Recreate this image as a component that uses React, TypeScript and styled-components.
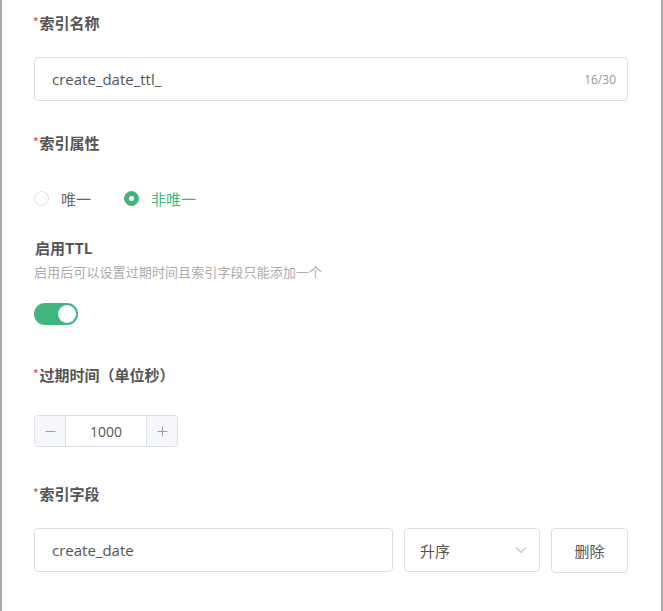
import React, { useState } from 'react';
import styled, { createGlobalStyle } from 'styled-components';

const GlobalStyle = createGlobalStyle`
  html, body {
    margin: 0;
    padding: 0;
    background: #fff;
  }
  body {
    font-family: 'Open Sans', 'Noto Sans CJK SC', sans-serif;
    color: #555;
  }
  * {
    box-sizing: border-box;
  }
`;

const green = '#3eb67c';
const border = '#dcdfe6';

const Panel = styled.div`
  width: 663px;
  min-height: 611px;
  border-left: 2px solid #a9a9a9;
  border-right: 2px solid #a9a9a9;
  padding: 12px 33px 0 32px;
`;

const FormItem = styled.div<{ $bottom: number }>`
  display: flex;
  flex-direction: column;
  margin-bottom: ${(p) => p.$bottom}px;
`;

const Label = styled.div<{ $required?: boolean }>`
  font-family: 'Noto Sans CJK SC', sans-serif;
  font-size: 15px;
  font-weight: 600;
  line-height: 22px;
  color: #555;
  margin-left: ${(p) => (p.$required ? '-1px' : '0')};

  &::before {
    content: ${(p) => (p.$required ? "'*'" : "''")};
    color: #e0354f;
    font-size: 12px;
    font-weight: 400;
    vertical-align: top;
    line-height: 19px;
    margin-right: 1px;
  }
`;

const Hint = styled.div`
  font-family: 'Noto Sans CJK SC', sans-serif;
  font-size: 13px;
  line-height: 18px;
  color: #ababab;
  margin-top: 4px;
  letter-spacing: 0.1px;
`;

const Content = styled.div<{ $top: number }>`
  display: flex;
  align-items: center;
  height: 44px;
  margin-top: ${(p) => p.$top}px;
`;

const TextBox = styled.div<{ $grow?: boolean }>`
  display: flex;
  align-items: center;
  height: 44px;
  flex: ${(p) => (p.$grow ? 1 : 'none')};
  border: 1px solid ${border};
  border-radius: 4px;
  padding: 0 11px 0 17px;
  font-size: 15px;
  color: #555;
`;

const Value = styled.span`
  flex: 1;
`;

const Counter = styled.span`
  font-size: 12px;
  color: #999;
`;

const RadioGroup = styled.div`
  display: flex;
  align-items: center;
  gap: 33px;
`;

const RadioOption = styled.label<{ $checked?: boolean }>`
  display: flex;
  align-items: center;
  gap: 12px;
  font-family: 'Noto Sans CJK SC', sans-serif;
  font-size: 15px;
  color: ${(p) => (p.$checked ? green : '#666')};
  cursor: pointer;
`;

const RadioDot = styled.span<{ $checked?: boolean }>`
  width: 15px;
  height: 15px;
  border-radius: 50%;
  border: 1px solid ${(p) => (p.$checked ? green : border)};
  background: ${(p) => (p.$checked ? green : '#fff')};
  display: flex;
  align-items: center;
  justify-content: center;

  &::after {
    content: '';
    width: 5px;
    height: 5px;
    border-radius: 50%;
    background: #fff;
    display: ${(p) => (p.$checked ? 'block' : 'none')};
  }
`;

const Switch = styled.button<{ $on: boolean }>`
  width: 44px;
  height: 22px;
  border-radius: 11px;
  border: none;
  padding: 2px;
  background: ${(p) => (p.$on ? green : '#dcdfe6')};
  display: flex;
  justify-content: ${(p) => (p.$on ? 'flex-end' : 'flex-start')};
  cursor: pointer;

  &::after {
    content: '';
    width: 18px;
    height: 18px;
    border-radius: 50%;
    background: #fff;
  }
`;

const Stepper = styled.div`
  display: flex;
  width: 144px;
  height: 32px;
  border: 1px solid ${border};
  border-radius: 4px;
  overflow: hidden;
`;

const StepButton = styled.span`
  width: 31px;
  background: #f5f7fa;
  display: flex;
  align-items: center;
  justify-content: center;
  color: #999;
  &:first-child {
    border-right: 1px solid ${border};
  }
  &:last-child {
    border-left: 1px solid ${border};
  }
`;

const StepValue = styled.span`
  flex: 1;
  display: flex;
  align-items: center;
  justify-content: center;
  font-size: 14px;
  color: #555;
`;

const FieldRow = styled.div`
  display: flex;
  align-items: center;
  gap: 11px;
  width: 100%;
`;

const Select = styled.div`
  width: 136px;
  height: 44px;
  border: 1px solid ${border};
  border-radius: 4px;
  display: flex;
  align-items: center;
  justify-content: space-between;
  padding: 0 12px 0 15px;
  font-family: 'Noto Sans CJK SC', sans-serif;
  font-size: 15px;
  color: #555;
`;

const DeleteButton = styled.button`
  width: 77px;
  height: 45px;
  border: 1px solid ${border};
  border-radius: 4px;
  background: #fff;
  font-family: 'Noto Sans CJK SC', sans-serif;
  font-size: 15px;
  color: #555;
  cursor: pointer;
`;

const Minus = () => (
  <svg width="11" height="11" viewBox="0 0 11 11">
    <path d="M0.5 5.5h10" stroke="#a0a0a0" strokeWidth="1" />
  </svg>
);

const Plus = () => (
  <svg width="11" height="11" viewBox="0 0 11 11">
    <path d="M0.5 5.5h10M5.5 0.5v10" stroke="#a0a0a0" strokeWidth="1" />
  </svg>
);

const Chevron = () => (
  <svg width="12" height="8" viewBox="0 0 12 8">
    <path d="M1 1.5l5 5 5-5" fill="none" stroke="#c0c4cc" strokeWidth="1.2" />
  </svg>
);

export default function App() {
  const [unique, setUnique] = useState(false);
  const [ttl, setTtl] = useState(true);

  return (
    <>
      <GlobalStyle />
      <Panel>
        <FormItem $bottom={31}>
          <Label $required>索引名称</Label>
          <Content $top={23}>
            <TextBox $grow>
              <Value>create_date_ttl_</Value>
              <Counter>16/30</Counter>
            </TextBox>
          </Content>
        </FormItem>

        <FormItem $bottom={17}>
          <Label $required>索引属性</Label>
          <Content $top={22}>
            <RadioGroup>
              <RadioOption $checked={unique} onClick={() => setUnique(true)}>
                <RadioDot $checked={unique} />
                唯一
              </RadioOption>
              <RadioOption $checked={!unique} onClick={() => setUnique(false)}>
                <RadioDot $checked={!unique} />
                非唯一
              </RadioOption>
            </RadioGroup>
          </Content>
        </FormItem>

        <FormItem $bottom={28}>
          <Label>启用TTL</Label>
          <Hint>启用后可以设置过期时间且索引字段只能添加一个</Hint>
          <Content $top={11}>
            <Switch $on={ttl} onClick={() => setTtl(!ttl)} />
          </Content>
        </FormItem>

        <FormItem $bottom={30}>
          <Label $required>过期时间（单位秒）</Label>
          <Content $top={23}>
            <Stepper>
              <StepButton>
                <Minus />
              </StepButton>
              <StepValue>1000</StepValue>
              <StepButton>
                <Plus />
              </StepButton>
            </Stepper>
          </Content>
        </FormItem>

        <FormItem $bottom={0}>
          <Label $required>索引字段</Label>
          <Content $top={23}>
            <FieldRow>
              <TextBox $grow>
                <Value>create_date</Value>
              </TextBox>
              <Select>
                <span>升序</span>
                <Chevron />
              </Select>
              <DeleteButton>删除</DeleteButton>
            </FieldRow>
          </Content>
        </FormItem>
      </Panel>
    </>
  );
}
